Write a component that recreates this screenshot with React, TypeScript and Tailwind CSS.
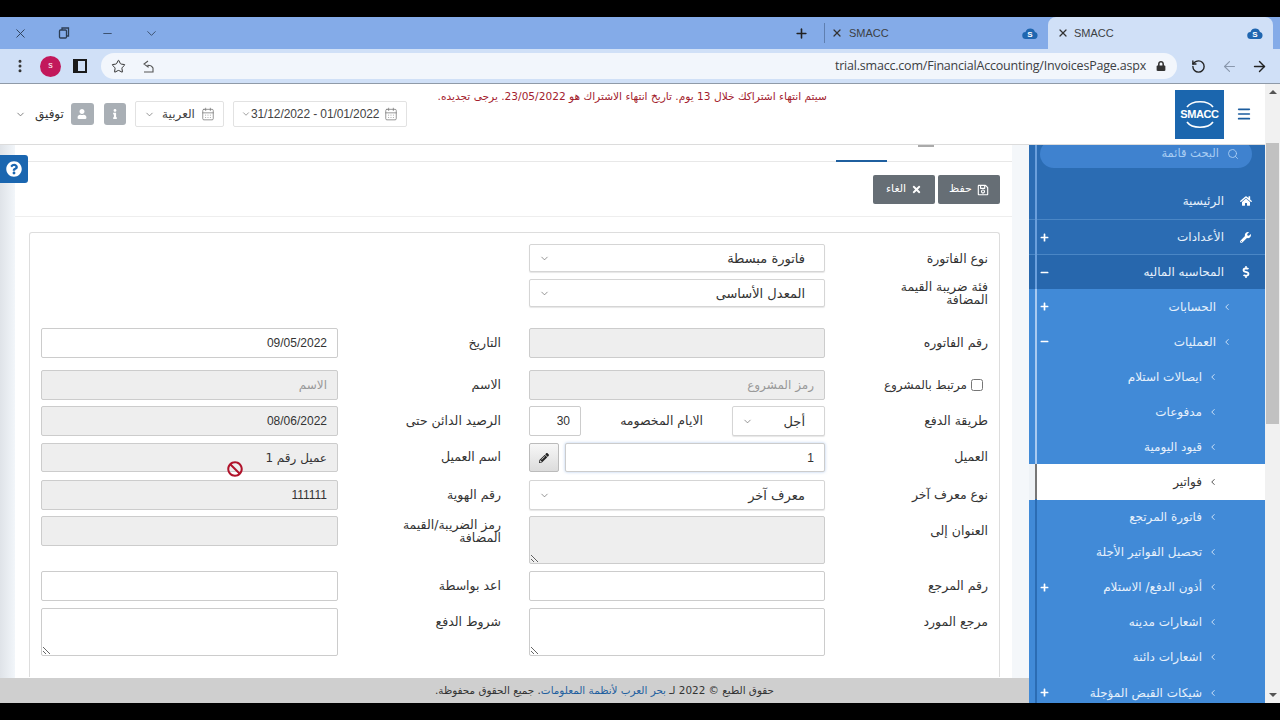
import {
  X, Minus, ChevronDown, ChevronLeft, Plus, EllipsisVertical, Star, RotateCw, ArrowLeft, ArrowRight,
  CalendarDays, Search, Menu,
} from 'lucide-react';
import {
  FaHome, FaWrench, FaDollarSign, FaRegSave, FaTimes, FaPencilAlt, FaBan, FaQuestionCircle,
  FaPlus, FaMinus, FaUser, FaInfo, FaLock,
} from 'react-icons/fa';

const arabic = "font-['DejaVu_Sans',sans-serif]";

function TabIcon() {
  return (
    <svg width="16" height="13" viewBox="0 0 16 13">
      <path d="M4 12a3.500 3.500 0 0 1-.5-7A5 5 0 0 1 13 5a3.600 3.600 0 0 1-.5 7z" fill="#1f66b0" />
      <text x="8" y="10" fontSize="8" fontWeight="700" fill="#fff" textAnchor="middle" fontFamily="Liberation Sans">S</text>
    </svg>
  );
}

function BrowserTab({ active }: { active?: boolean }) {
  return (
    <div className={`flex items-center h-[32px] ${active ? 'w-[225px] bg-[#d0e0f7] rounded-t-lg pl-[9px] pr-[10px]' : 'w-[223px] pl-[6px] pr-[10px]'}`}>
      <X size={12} strokeWidth={2.5} className="text-[#333]" />
      <span className={`${active ? 'ml-[5px]' : 'ml-[6px]'} text-[11px] text-[#3c4043] font-['Liberation_Sans',sans-serif]`}>SMACC</span>
      <span className="ml-auto"><TabIcon /></span>
    </div>
  );
}

function BrowserChrome() {
  return (
    <>
      <div className="h-[32px] bg-[#84abe8] flex items-center text-[#2c3e55]">
        <div className="w-[20px]" />
        <X size={15} strokeWidth={1.5} className="-ml-[7px]" />
        <svg width="12" height="12" viewBox="0 0 12 12" fill="none" stroke="currentColor" strokeWidth="1.3" className="ml-[30px]">
          <rect x="1.500" y="3" width="7" height="8" rx="1" />
          <path d="M4 3V1h6.500v8H8.500" />
        </svg>
        <Minus size={13} strokeWidth={1.5} className="ml-[31px]" />
        <ChevronDown size={15} strokeWidth={1.3} className="ml-[30px]" />
        <Plus size={15} strokeWidth={2.5} className="ml-[635px] text-[#222]" />
        <div className="w-px h-[20px] bg-[#5f7fb0] ml-[15px]" />
        <BrowserTab />
        <BrowserTab active />
      </div>
      <div className="h-[35px] bg-[#d0e0f7] border-b border-[#8f9aa8] flex items-center text-[#333]">
        <EllipsisVertical size={16} strokeWidth={2.5} className="ml-[12px]" />
        <div className="ml-[12px] w-[21px] h-[21px] rounded-full bg-[#c2185b] text-white text-[9px] flex items-center justify-center font-['Liberation_Sans',sans-serif]">s</div>
        <div className="ml-[12px] w-[14px] h-[14px] border-2 border-[#1a1a1a] border-l-[5px]" />
        <div className="ml-[14px] w-[1076px] h-[26px] rounded-full bg-[#f2f6fc] flex items-center pl-[10px] pr-[11px]">
          <Star size={15} strokeWidth={1.6} />
          <svg width="15" height="15" viewBox="0 0 15 15" fill="none" stroke="#555" strokeWidth="1.1" className="ml-[15px]">
            <path d="M7 2 3 5l4 3V6.300c2 0 4 .7 5 2.700V13H3" />
          </svg>
          <span className="ml-auto text-[12.500px] text-[#3c4043] font-['Open_Sans',sans-serif] tracking-[-0.2px]">trial.smacc.com/FinancialAccounting/InvoicesPage.aspx</span>
          <FaLock size={10} className="ml-[10px]" />
        </div>
        <RotateCw size={15} strokeWidth={2.2} className="ml-[14px] -scale-x-100 text-[#222]" />
        <ArrowLeft size={17} strokeWidth={1.6} className="ml-[15px] text-[#8a98ad]" />
        <ArrowRight size={17} strokeWidth={2} className="ml-[13px] text-[#222]" />
      </div>
    </>
  );
}

function Header() {
  return (
    <div className="h-[61px] bg-white border-b border-[#dcdcdc] flex items-start shrink-0">
      <div className="flex items-center h-[26px] mt-[17px] ml-[15px] text-[#444]">
        <ChevronDown size={11} strokeWidth={2} className="text-[#777]" />
        <span className={`ml-[9px] text-[12px] text-[#333] ${arabic}`}>توفيق</span>
        <div className="ml-[7px] w-[23px] h-[22px] rounded-[3px] bg-[#a9afb5] flex items-center justify-center text-white"><FaUser size={10} /></div>
        <div className="ml-[10px] w-[22px] h-[22px] rounded-[3px] bg-[#a9afb5] flex items-center justify-center text-white"><FaInfo size={10} /></div>
        <div className="ml-[9px] w-[89px] h-[26px] border border-[#e2e2e2] rounded-[2px] flex items-center px-[8px]">
          <ChevronDown size={11} strokeWidth={1.5} className="text-[#666]" />
          <span className={`ml-auto text-[12px] ${arabic}`}>العربية</span>
          <CalendarDays size={14} strokeWidth={1.3} className="ml-[6px] text-[#777]" />
        </div>
        <div className="ml-[9px] w-[174px] h-[26px] border border-[#e2e2e2] rounded-[2px] flex items-center pl-[7px] pr-[8px]">
          <ChevronDown size={10} strokeWidth={1.5} className="text-[#666]" />
          <span className="text-[12px] font-['Liberation_Sans',sans-serif] tracking-[-0.1px]">31/12/2022 - 01/01/2022</span>
          <CalendarDays size={14} strokeWidth={1.3} className="ml-auto text-[#777]" />
        </div>
      </div>
      <div dir="rtl" className={`ml-[30px] mt-[5px] w-[390px] text-[10.600px] leading-[14px] whitespace-nowrap text-[#a31d2e] ${arabic}`}>
        سيتم انتهاء اشتراكك خلال 13 يوم. تاريخ انتهاء الاشتراك هو 23/05/2022. يرجى تجديده.
      </div>
      <div className="ml-auto mt-[6px] w-[49px] h-[49px] bg-[#1b66ae] flex flex-col items-center justify-center text-white">
        <svg width="36" height="10" viewBox="0 0 36 10" fill="none" stroke="#fff" strokeWidth="1.600"><path d="M5 9C10 2 26 2 31 9" /></svg>
        <span className="text-[11px] leading-[13px] font-bold tracking-[-0.4px] font-['Liberation_Sans',sans-serif]">SMACC</span>
        <svg width="36" height="10" viewBox="0 0 36 10" fill="none" stroke="#fff" strokeWidth="1.600"><path d="M5 1C10 8 26 8 31 1" /></svg>
      </div>
      <Menu size={16} strokeWidth={2.5} className="ml-[12px] mr-[13px] mt-[22px] text-[#1b5c9e]" />
    </div>
  );
}

const inputBase = `h-full w-full border border-[#ccc] rounded-[2px] px-[10px] text-[12px] text-[#333] outline-none text-right ${arabic}`;

function Field({ value, placeholder, off, className = '' }: { value?: string; placeholder?: string; off?: boolean; className?: string }) {
  return (
    <input
      readOnly
      value={value ?? ''}
      placeholder={placeholder}
      className={`${inputBase} ${off ? 'bg-[#eeeeee]' : 'bg-white'} placeholder:text-[#999] ${className}`}
    />
  );
}

function Area({ off, className = '' }: { off?: boolean; className?: string }) {
  return <textarea readOnly className={`block w-full border border-[#ccc] rounded-[2px] outline-none ${off ? 'bg-[#eeeeee]' : 'bg-white'} ${className}`} />;
}

function Select({ text, className = '' }: { text: string; className?: string }) {
  return (
    <div className={`h-full border border-[#d5d5d5] rounded-[2px] bg-white flex items-center pr-[19px] pl-[9px] shadow-[0_1px_1px_rgba(0,0,0,0.1)] ${className}`}>
      <span className={`text-[13px] text-[#333] pt-[1px] ${arabic}`}>{text}</span>
      <ChevronDown size={11} strokeWidth={1.5} className="mr-auto text-[#666]" />
    </div>
  );
}

function Label({ children, className = '' }: { children: React.ReactNode; className?: string }) {
  return <div className={`text-[12.500px] leading-[13px] text-[#333] ${arabic} ${className}`}>{children}</div>;
}

// one form line: right label + right control + left label + left control
function Row({ h, mt, rl, rc, ll, lc, top }: { h: string; mt: string; rl?: React.ReactNode; rc?: React.ReactNode; ll?: React.ReactNode; lc?: React.ReactNode; top?: boolean }) {
  return (
    <div className={`flex ${h} ${mt} ${top ? 'items-start' : 'items-center'}`}>
      <div className={`w-[163px] shrink-0 ${top ? '' : 'pb-[2px]'}`}>{rl}</div>
      <div className="w-[296px] shrink-0 h-full">{rc}</div>
      <div className={`w-[191px] shrink-0 pr-[28px] ${top ? '' : 'pb-[2px]'}`}>{ll}</div>
      <div className="w-[297px] shrink-0 h-full">{lc}</div>
    </div>
  );
}

function InvoiceForm() {
  return (
    <div dir="rtl" className="ml-[14px] w-[971px] border border-[#dddddd] border-b-0 rounded-t-[3px] pt-[11px] pr-[11px] h-[445px]">
      <Row h="h-[28px]" mt="mt-0" rl={<Label className="mt-[2px]">نوع الفاتورة</Label>} rc={<Select text="فاتورة مبسطة" />} />
      <Row h="h-[28px]" mt="mt-[7px]" rl={<Label className="pl-[66px] mt-[2px]">فئة ضريبة القيمة المضافة</Label>} rc={<Select text="المعدل الأساسى" />} />
      <Row h="h-[30px]" mt="mt-[21px]" rl={<Label>رقم الفاتوره</Label>} rc={<Field off />} ll={<Label>التاريخ</Label>} lc={<Field value="09/05/2022" className="font-['Liberation_Sans',sans-serif]" />} />
      <Row
        h="h-[30px]"
        mt="mt-[12px]"
        rl={<Label className="flex items-center gap-[4px] pr-[5px] mt-[2px] whitespace-nowrap text-[12px]"><input type="checkbox" readOnly className="w-[12px] h-[12px]" />مرتبط بالمشروع</Label>}
        rc={<Field off placeholder="رمز المشروع" />}
        ll={<Label>الاسم</Label>}
        lc={<Field off placeholder="الاسم" />}
      />
      <Row
        h="h-[30px]"
        mt="mt-[6px]"
        rl={<Label>طريقة الدفع</Label>}
        rc={
          <div className="flex items-center h-full">
            <Select text="أجل" className="w-[93px] shrink-0" />
            <Label className="flex-1 pr-[29px] pb-[2px] text-[#111]">الايام المخصومه</Label>
            <div className="w-[52px] h-full shrink-0"><Field value="30" className="text-[#1c1c7c] font-['Liberation_Sans',sans-serif]" /></div>
          </div>
        }
        ll={<Label className="text-[#111] whitespace-nowrap">الرصيد الدائن حتى</Label>}
        lc={<Field off value="08/06/2022" className="text-[#1c1c7c] font-['Liberation_Sans',sans-serif]" />}
      />
      <Row
        h="h-[29px]"
        mt="mt-[7px]"
        rl={<Label>العميل</Label>}
        rc={
          <div className="flex h-full gap-[6px]">
            <Field value="1" className="font-['Liberation_Sans',sans-serif] shadow-[0_0_3px_rgba(100,150,220,0.5)]" />
            <div className="w-[30px] h-full shrink-0 border border-[#bbb] rounded-[2px] bg-gradient-to-b from-[#f7f7f7] to-[#dcdcdc] flex items-center justify-center text-[#222]"><FaPencilAlt size={10} /></div>
          </div>
        }
        ll={<Label>اسم العميل</Label>}
        lc={
          <div className="relative h-full">
            <Field off value="عميل رقم 1" />
            <FaBan size={16} className="absolute left-[186px] top-[18px] text-[#b0122a]" />
          </div>
        }
      />
      <Row h="h-[30px]" mt="mt-[8px]" rl={<Label>نوع معرف آخر</Label>} rc={<Select text="معرف آخر" />} ll={<Label>رقم الهوية</Label>} lc={<Field off value="111111" className="font-['Liberation_Sans',sans-serif]" />} />
      <Row
        h="h-[48px]"
        mt="mt-[6px]"
        top
        rl={<Label className="pt-[8px]">العنوان إلى</Label>}
        rc={<Area off className="h-[48px]" />}
        ll={<Label className="pt-[2px] whitespace-nowrap">رمز الضريبة/القيمة<br />المضافة</Label>}
        lc={<div className="h-[30px]"><Field off /></div>}
      />
      <Row h="h-[30px]" mt="mt-[7px]" rl={<Label>رقم المرجع</Label>} rc={<Field />} ll={<Label>اعد بواسطة</Label>} lc={<Field />} />
      <Row
        h="h-[48px]"
        mt="mt-[7px]"
        top
        rl={<Label className="pt-[7px]">مرجع المورد</Label>}
        rc={<Area className="h-[48px]" />}
        ll={<Label className="pt-[7px]">شروط الدفع</Label>}
        lc={<Area className="h-[48px]" />}
      />
    </div>
  );
}

function Content() {
  return (
    <div className="relative w-[1029px] shrink-0 flex flex-col bg-white">
      <div className="absolute left-0 top-[10px] w-[28px] h-[28px] bg-[#1a66b0] rounded-r-[3px] flex items-center justify-center text-white z-10">
        <FaQuestionCircle size={16} />
      </div>
      <div className="flex flex-1 min-h-0 overflow-hidden">
        <div className="w-[15px] shrink-0 bg-gradient-to-r from-[#dfe3e8] to-[#f2f6fa]" />
        <div className="flex-1 min-w-0">
          <div className="relative h-[17px] border-b border-[#e8e8e8]">
            <div className="absolute left-[821px] bottom-[-1px] w-[51px] h-[2px] bg-[#1f5f9f]" />
            <div className="absolute left-[903px] top-0 w-[16px] h-[2px] bg-[#aaa]" />
          </div>
          <div className="h-[55px] border-b border-[#eeeeee] flex justify-end gap-[3px] pr-[12px] pt-[13px]">
            <div className={`h-[29px] w-[62px] rounded-[2px] bg-[#666e75] text-white flex items-center justify-center gap-[5px] text-[11px] ${arabic}`}>
              <span>الغاء</span><FaTimes size={11} />
            </div>
            <div className={`h-[29px] w-[62px] rounded-[2px] bg-[#666e75] text-white flex items-center justify-center gap-[5px] text-[11px] ${arabic}`}>
              <span>حفظ</span><FaRegSave size={12} />
            </div>
          </div>
          <div className="pt-[15px]">
            <InvoiceForm />
          </div>
        </div>
        <div className="w-[17px] shrink-0 bg-[#f4f7fa]" />
      </div>
      <div dir="rtl" className={`h-[25px] shrink-0 bg-[#cfcfcf] flex items-center justify-center text-[10.400px] text-[#333] pl-[180px] ${arabic}`}>
        <span>حقوق الطبع © 2022 لـ <span className="text-[#1f5f9f]">بحر العرب لأنظمة المعلومات</span>. جميع الحقوق محفوظة.</span>
      </div>
    </div>
  );
}

type Item = { label: string; pad: string; sign?: 'plus' | 'minus'; active?: boolean };

const topItems = [
  { label: 'الرئيسية', icon: <FaHome size={12} />, h: 'h-[37px]' },
  { label: 'الأعدادات', icon: <FaWrench size={11} />, sign: 'plus', h: 'h-[35px] border-t border-[#4a86c5]' },
  { label: 'المحاسبه الماليه', icon: <FaDollarSign size={12} />, sign: 'minus', h: 'h-[35px] border-t border-[#4a86c5] bg-[#2767ad]' },
];

const subItems: Item[] = [
  { label: 'الحسابات', pad: 'pr-[33px]', sign: 'plus' },
  { label: 'العمليات', pad: 'pr-[33px]', sign: 'minus' },
  { label: 'ايصالات استلام', pad: 'pr-[47px]' },
  { label: 'مدفوعات', pad: 'pr-[47px]' },
  { label: 'قيود اليومية', pad: 'pr-[47px]' },
  { label: 'فواتير', pad: 'pr-[47px]', active: true },
  { label: 'فاتورة المرتجع', pad: 'pr-[47px]' },
  { label: 'تحصيل الفواتير الأجلة', pad: 'pr-[47px]' },
  { label: 'أذون الدفع/ الاستلام', pad: 'pr-[47px]', sign: 'plus' },
  { label: 'اشعارات مدينه', pad: 'pr-[47px]' },
  { label: 'اشعارات دائنة', pad: 'pr-[47px]' },
  { label: 'شيكات القبض المؤجلة', pad: 'pr-[47px]', sign: 'plus' },
];

function Sign({ kind }: { kind?: string }) {
  if (!kind) return null;
  const Icon = kind === 'plus' ? FaPlus : FaMinus;
  return <Icon size={9} className="mr-auto ml-[11px] text-white" />;
}

function Sidebar() {
  return (
    <div dir="rtl" className={`relative w-[236px] shrink-0 overflow-hidden bg-[#2b6cb3] text-[12px] ${arabic}`}>
      <div className="h-[37px] flex flex-col">
        <div className="mt-[-5px] mr-[13px] ml-[11px] h-[28px] rounded-full bg-[#3f82cf] flex items-center pr-[13px] text-[#a9cdf3] text-[11.500px]">
          <Search size={12} strokeWidth={1.8} className="ml-[8px]" />
          <span>البحث قائمة</span>
        </div>
      </div>
      {topItems.map((t) => (
        <div key={t.label} className={`flex items-center ${t.h} pr-[13px] text-[#e6f0fb]`}>
          <span className="w-[13px] flex justify-center text-white">{t.icon}</span>
          <span className="mr-[15px]">{t.label}</span>
          <Sign kind={t.sign} />
        </div>
      ))}
      {subItems.map((s) => (
        <div
          key={s.label}
          className={`flex items-center h-[35.100px] ${s.pad} ${s.active ? 'bg-white text-[#333] border-l-[8px] border-[#eef2f6]' : 'bg-[#418ad7] text-[#e6f0fb]'}`}
        >
          <ChevronLeft size={10} strokeWidth={2} className="shrink-0" />
          <span className="mr-[6px]">{s.label}</span>
          <Sign kind={s.sign} />
        </div>
      ))}
      <div className="absolute left-[6px] top-0 w-[2px] h-[144px] bg-[#6a9fdc]" />
      <div className="absolute left-[6px] top-[144px] w-[2px] h-[175px] bg-[#a9caf0]" />
      <div className="absolute left-[6px] top-[319px] w-[2px] h-[35px] bg-[#777]" />
      <div className="absolute left-[6px] top-[354px] w-[2px] h-[204px] bg-[#2b6cb3]" />
    </div>
  );
}

function PageScrollbar() {
  return (
    <div className="w-[15px] shrink-0 bg-[#f1f1f1] flex flex-col items-center">
      <div className="mt-[6px] w-0 h-0 border-x-[4px] border-x-transparent border-b-[4px] border-b-[#555]" />
      <div className="mt-[49px] w-[13px] h-[281px] bg-[#c1c1c1]" />
      <div className="mt-auto mb-[6px] w-0 h-0 border-x-[4px] border-x-transparent border-t-[4px] border-t-[#555]" />
    </div>
  );
}

export default function App() {
  return (
    <div className="w-[1280px] h-[720px] overflow-hidden bg-black flex flex-col">
      <div className="h-[17px] shrink-0" />
      <BrowserChrome />
      <div className="flex h-[619px] shrink-0 bg-white">
        <div className="w-[1265px] shrink-0 flex flex-col">
          <Header />
          <div className="flex flex-1 min-h-0">
            <Content />
            <Sidebar />
          </div>
        </div>
        <PageScrollbar />
      </div>
    </div>
  );
}
